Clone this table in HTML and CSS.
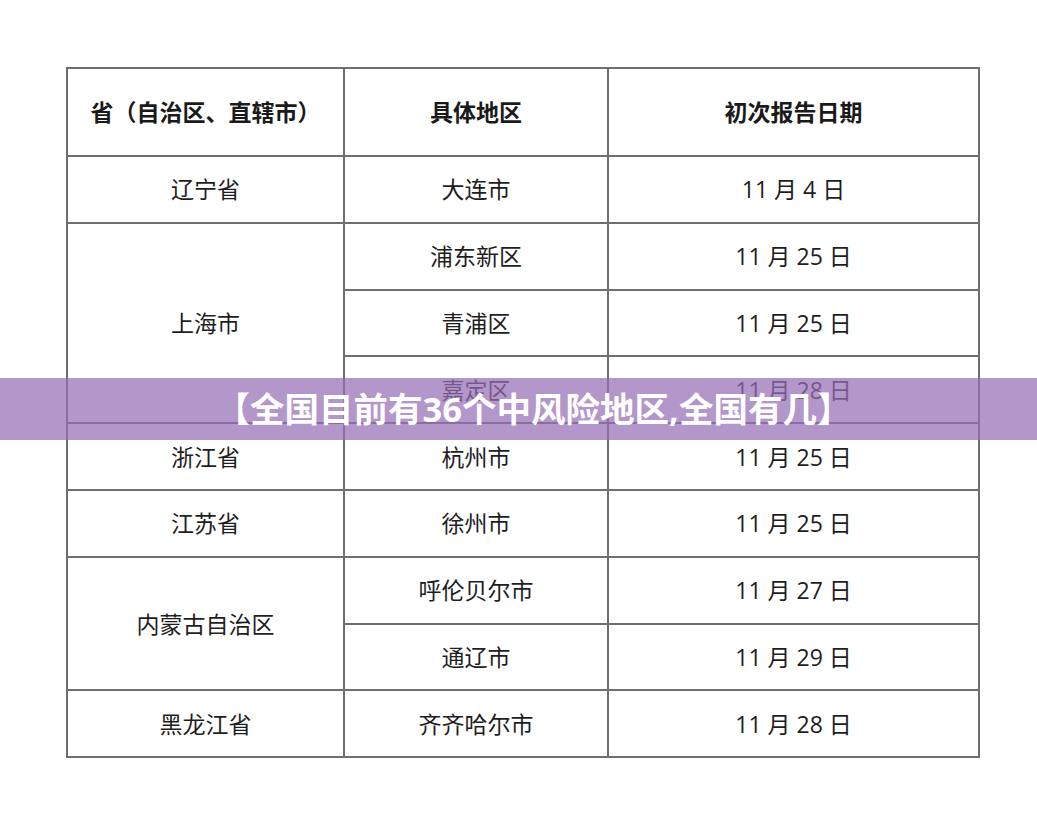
FILE: index.html
```html
<!DOCTYPE html>
<html lang="zh-CN">
<head>
<meta charset="utf-8">
<title>全国中风险地区</title>
<link rel="stylesheet" href="styles.css">
</head>
<body>
<div class="page">
  <table class="risk-table">
    <colgroup>
      <col class="c1"><col class="c2"><col class="c3">
    </colgroup>
    <thead>
      <tr class="head-row">
        <th>省（自治区、直辖市）</th>
        <th>具体地区</th>
        <th>初次报告日期</th>
      </tr>
    </thead>
    <tbody>
      <tr><td>辽宁省</td><td>大连市</td><td>11 月 4 日</td></tr>
      <tr><td rowspan="3">上海市</td><td>浦东新区</td><td>11 月 25 日</td></tr>
      <tr><td>青浦区</td><td>11 月 25 日</td></tr>
      <tr><td>嘉定区</td><td>11 月 28 日</td></tr>
      <tr><td>浙江省</td><td>杭州市</td><td>11 月 25 日</td></tr>
      <tr><td>江苏省</td><td>徐州市</td><td>11 月 25 日</td></tr>
      <tr><td rowspan="2">内蒙古自治区</td><td>呼伦贝尔市</td><td>11 月 27 日</td></tr>
      <tr><td>通辽市</td><td>11 月 29 日</td></tr>
      <tr><td>黑龙江省</td><td>齐齐哈尔市</td><td>11 月 28 日</td></tr>
    </tbody>
  </table>
  <div class="banner">【全国目前有36个中风险地区,全国有几】</div>
</div>
</body>
</html>
```

FILE: styles.css
```css
html, body {
  margin: 0;
  padding: 0;
  background: #ffffff;
}

body {
  width: 1037px;
  height: 820px;
  overflow: hidden;
  font-family: "Open Sans", "Noto Sans CJK SC", sans-serif;
  color: #1e1e1e;
}

.page {
  position: relative;
  width: 1037px;
  height: 820px;
  padding: 67px 0 0 66px;
  box-sizing: border-box;
}

.risk-table {
  border-collapse: collapse;
  table-layout: fixed;
  width: 912px;
}

.c1 { width: 277px; }
.c2 { width: 264px; }
.c3 { width: 371px; }

.risk-table th,
.risk-table td {
  border: 2px solid #6e6e6e;
  text-align: center;
  vertical-align: middle;
  padding: 0;
  font-size: 23px;
  line-height: 30px;
}

.risk-table th {
  font-weight: 700;
  height: 86px;
  color: #1a1a1a;
}

.risk-table td {
  font-weight: 400;
  height: 64.8px;
}

.banner {
  position: absolute;
  left: 0;
  top: 378px;
  width: 1037px;
  height: 62px;
  background: rgba(150, 110, 182, 0.72);
  color: #ffffff;
  font-family: "Open Sans", "Noto Sans CJK SC", sans-serif;
  font-weight: 700;
  font-size: 34.5px;
  line-height: 62px;
  text-align: center;
  padding-left: 30px;
  box-sizing: border-box;
  white-space: nowrap;
}
```
